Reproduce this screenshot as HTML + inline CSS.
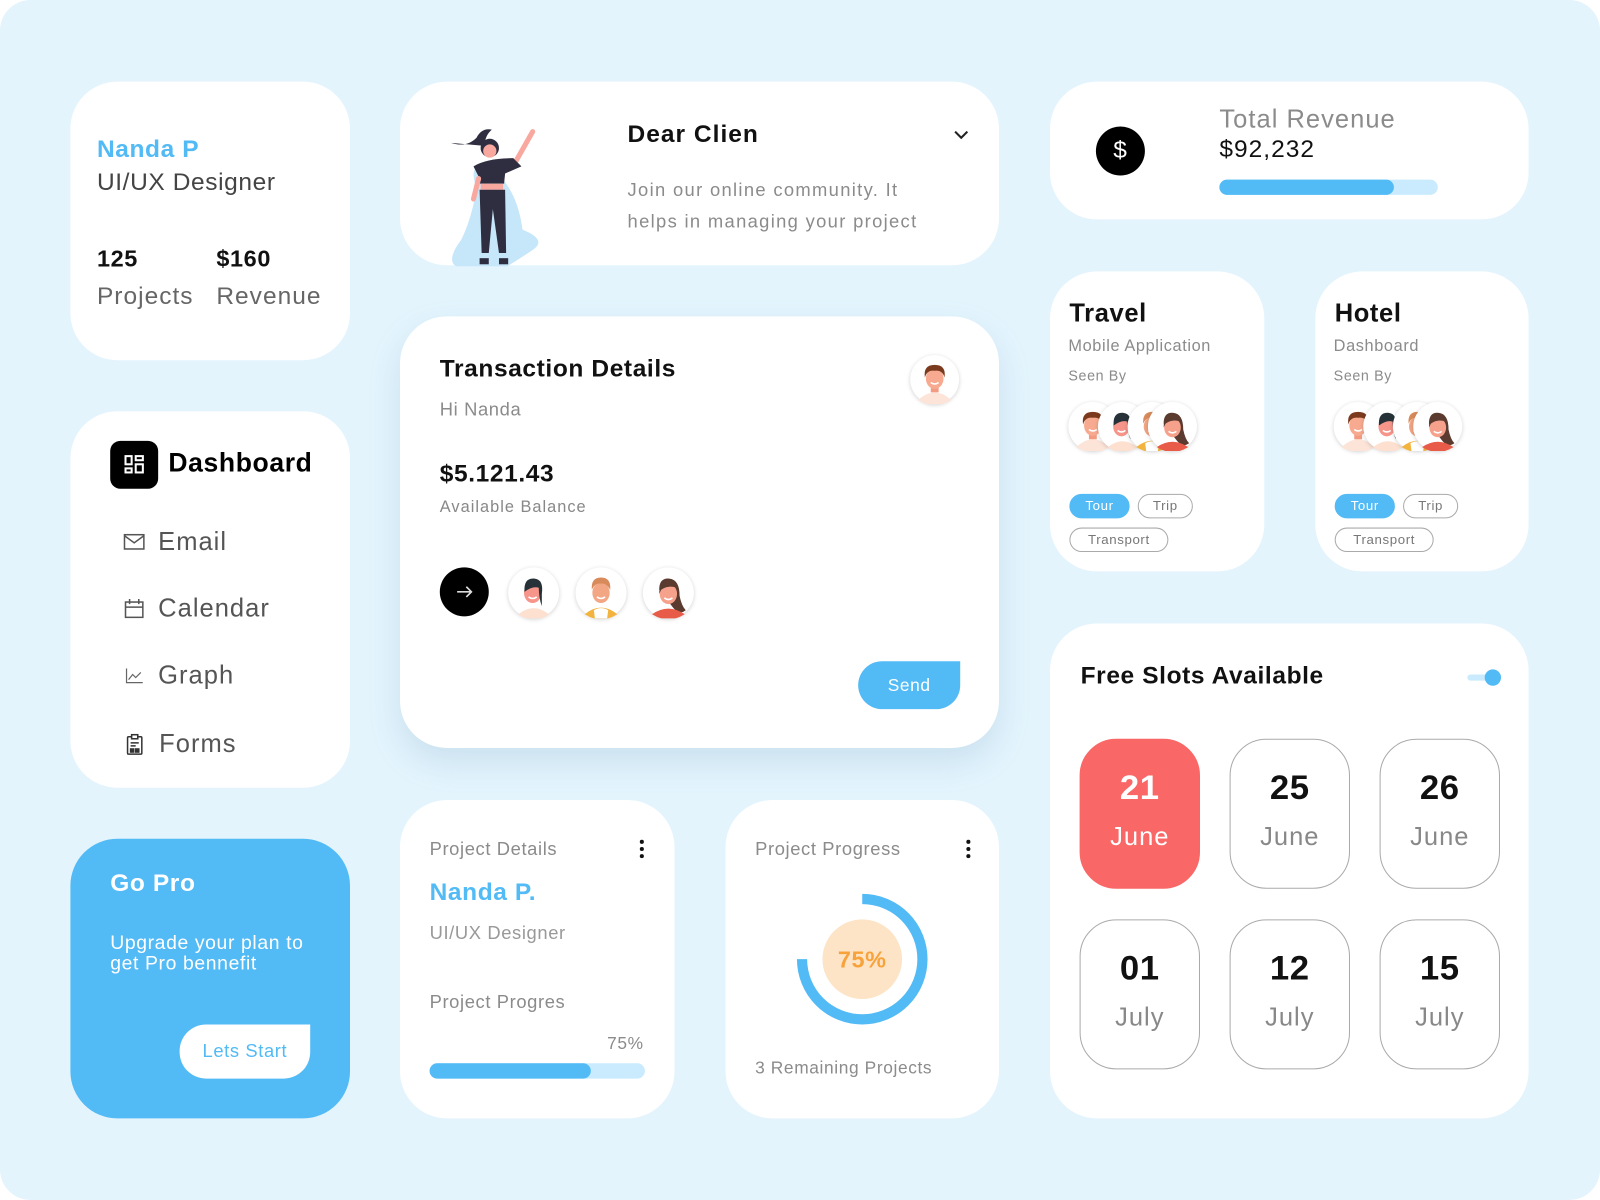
<!DOCTYPE html>
<html><head><meta charset="utf-8">
<style>
*{box-sizing:border-box;margin:0;padding:0}
html,body{width:1600px;height:1200px;overflow:hidden;background:#fff;font-family:"Liberation Sans",sans-serif}
#wrap{position:absolute;left:0;top:0;width:1568px;height:1176px;transform:scale(1.02041);transform-origin:0 0;background:#e3f4fd;border-radius:30px;letter-spacing:0.6px}
.card{position:absolute;background:#fff;border-radius:46px}
.abs{position:absolute}
.g{color:#8b8b8b}
.b{font-weight:bold}
.av{position:absolute;width:50px;height:50px;border-radius:50%;box-shadow:0 1px 4px rgba(0,0,0,.18);background:#fff}
.av svg{display:block}
.tag{position:absolute;height:24px;border:1px solid #aaa;border-radius:12px;font-size:13px;color:#777;text-align:center;line-height:22px}
.tag.on{background:#52baf5;border-color:#52baf5;color:#fff}
.slot{position:absolute;width:118px;height:147px;border:1px solid #aaa;border-radius:36px;text-align:center}
.slot .d{font-size:34px;font-weight:bold;margin-top:28px;color:#111}
.slot .m{font-size:25px;color:#888;margin-top:14px;letter-spacing:1px}
.nav{position:absolute;left:120px;font-size:25px;color:#555;letter-spacing:1px}
</style></head><body>
<svg width="0" height="0" style="position:absolute">
<defs>
<g id="boyA"><path d="M8 46 Q25 30 42 46 Q34 51 25 51 Q16 51 8 46Z" fill="#fde4d8"/><rect x="21" y="30" width="8" height="8" fill="#f39b80"/><ellipse cx="25" cy="24" rx="9" ry="10.5" fill="#f7aa90"/><path d="M15 23 Q13 10 25 10 Q37 10 35 23 Q33 15 25 16 Q17 15 15 23Z" fill="#7b3a1d"/><path d="M21 28 Q25 31 29 28" stroke="#fff" stroke-width="1.6" fill="none"/></g>
<g id="girlB"><path d="M10 46 Q25 34 40 46 Q33 51 25 51 Q17 51 10 46Z" fill="#fde0d0"/><ellipse cx="24" cy="25" rx="8.5" ry="10" fill="#f6958a"/><path d="M16 24 Q15 10 26 11 Q35 12 33 26 L33 38 Q30 30 30 20 Q24 18 16 24Z" fill="#263238"/><path d="M20 29 Q24 32 28 29" stroke="#fff" stroke-width="1.6" fill="none"/></g>
<g id="boyC"><path d="M9 46 Q25 33 41 46 Q33 51 25 51 Q17 51 9 46Z" fill="#f3b33f"/><path d="M18 42 Q25 38 32 42 L31 50 L19 50Z" fill="#fff"/><ellipse cx="25" cy="25" rx="8.5" ry="10" fill="#f2a684"/><path d="M16 22 Q15 10 25 10 Q35 10 34 22 Q30 15 25 16 Q19 15 16 22Z" fill="#d88a5a"/><path d="M21 29 Q25 32 29 29" stroke="#fff" stroke-width="1.6" fill="none"/></g>
<g id="girlD"><path d="M16 22 Q16 10 26 11 Q36 12 36 28 Q38 38 42 42 Q36 47 30 40 Z" fill="#5b3a2f"/><path d="M9 46 Q25 35 41 46 Q33 51 25 51 Q17 51 9 46Z" fill="#e85b48"/><ellipse cx="25" cy="26" rx="8.5" ry="10" fill="#f6a18c"/><path d="M16 26 Q16 13 27 13 Q31 17 33 20 Q25 17 18 22Z" fill="#5b3a2f"/><path d="M21 30 Q25 33 29 30" stroke="#fff" stroke-width="1.6" fill="none"/></g>
</defs></svg>
<div id="wrap">

<div class="card" style="left:69px;top:80px;width:274px;height:273px">
 <div class="abs b" style="left:26px;top:53px;font-size:24px;color:#52baf5">Nanda P</div>
 <div class="abs" style="left:26px;top:85px;font-size:24px;color:#444">UI/UX Designer</div>
 <div class="abs b" style="left:26px;top:160px;font-size:23px;color:#111">125</div>
 <div class="abs b" style="left:143px;top:160px;font-size:23px;color:#111">$160</div>
 <div class="abs" style="left:26px;top:197px;font-size:24px;color:#666;letter-spacing:1px">Projects</div>
 <div class="abs" style="left:143px;top:197px;font-size:24px;color:#666;letter-spacing:1px">Revenue</div>
</div>

<div class="card" style="left:69px;top:403px;width:274px;height:369px"></div>
<div class="abs" style="left:108px;top:432px;width:47px;height:47px;background:#000;border-radius:10px">
 <svg width="47" height="47" viewBox="0 0 47 47" fill="none" stroke="#fff" stroke-width="2"><rect x="15" y="15" width="6" height="8"/><rect x="25" y="15" width="7" height="4"/><rect x="15" y="27" width="6" height="4"/><rect x="25" y="23" width="7" height="8"/></svg>
</div>
<div class="abs b" style="left:165px;top:438px;font-size:26px;color:#000">Dashboard</div>
<svg class="abs" style="left:121px;top:523px" width="21" height="16" viewBox="0 0 21 16" fill="none" stroke="#555" stroke-width="1.5"><rect x="1" y="1" width="19" height="14"/><path d="M1 2 L10.5 9 L20 2"/></svg>
<div class="nav" style="left:155px;top:517px">Email</div>
<svg class="abs" style="left:122px;top:587px" width="19" height="19" viewBox="0 0 19 19" fill="none" stroke="#555" stroke-width="1.5"><rect x="1" y="3" width="17" height="15"/><path d="M1 8 H18 M5 0 V5 M14 0 V5"/></svg>
<div class="nav" style="left:155px;top:582px">Calendar</div>
<svg class="abs" style="left:123px;top:655px" width="17" height="15" viewBox="0 0 17 15" fill="none" stroke="#666" stroke-width="1.2"><path d="M1 0 V14 H17 M3 11 L7 6 L10 9 L15 4"/></svg>
<div class="nav" style="left:155px;top:648px">Graph</div>
<svg class="abs" style="left:124px;top:719px" width="16" height="21" viewBox="0 0 16 21" fill="none" stroke="#333" stroke-width="1.5"><rect x="1" y="3" width="14" height="17" rx="1"/><rect x="5" y="1" width="6" height="4" fill="#fff"/><path d="M4 9 H12 M4 12 H9"/><rect x="4" y="15" width="3" height="3" fill="#333"/><rect x="9" y="15" width="3" height="3" fill="#333"/></svg>
<div class="nav" style="left:156px;top:715px">Forms</div>

<div class="card" style="left:69px;top:822px;width:274px;height:274px;background:#52baf5">
 <div class="abs b" style="left:39px;top:30px;font-size:24px;color:#fff">Go Pro</div>
 <div class="abs" style="left:39px;top:93px;font-size:19px;color:#fff;line-height:20px">Upgrade your plan to<br>get Pro bennefit</div>
 <div class="abs" style="left:107px;top:182px;width:128px;height:53px;background:#fff;border-radius:26px 0 26px 26px;color:#52baf5;font-size:18px;text-align:center;line-height:53px">Lets Start</div>
</div>

<div class="card" style="left:392px;top:80px;width:587px;height:180px">
 <svg class="abs" style="left:45px;top:35px" width="110" height="146" viewBox="0 0 110 146">
  <path d="M30 70 Q20 40 45 50 Q70 70 75 110 Q100 120 85 130 Q70 140 60 146 L10 146 Q0 140 15 120 Q25 100 30 70Z" fill="#c6e6fa"/>
  <path d="M5 25 Q20 30 30 20 Q35 10 45 12 Q38 18 38 28" fill="#2f2e41"/>
  <circle cx="43" cy="30" r="9" fill="#2f2e41"/><circle cx="43" cy="33" r="6.5" fill="#f9a8a0"/>
  <path d="M68 44 L85 14" stroke="#f9a8a0" stroke-width="5" stroke-linecap="round"/>
  <path d="M27 48 Q40 40 66 40 L74 48 L58 55 L57 65 L33 65 L32 58Z" fill="#2f2e41"/>
  <path d="M32 60 L27 80" stroke="#f9a8a0" stroke-width="5" stroke-linecap="round"/>
  <rect x="34" y="65" width="22" height="6" fill="#f9a8a0"/>
  <path d="M33 71 L58 71 L59 133 L52 133 L46 90 L42 133 L35 133Z" fill="#2f2e41"/>
  <rect x="33" y="138" width="9" height="6" fill="#2f2e41"/><rect x="52" y="138" width="9" height="6" fill="#2f2e41"/>
 </svg>
 <div class="abs b" style="left:223px;top:38px;font-size:24px;color:#111;letter-spacing:1px">Dear Clien</div>
 <svg class="abs" style="left:543px;top:48px" width="14" height="9" viewBox="0 0 14 9" fill="none" stroke="#222" stroke-width="2"><path d="M1 1 L7 7 L13 1"/></svg>
 <div class="abs g" style="left:223px;top:91px;font-size:18px;line-height:31px;letter-spacing:1.3px">Join our online community. It<br>helps in managing your project</div>
</div>

<div class="card" style="left:392px;top:310px;width:587px;height:423px;box-shadow:0 14px 30px rgba(120,160,190,.22)">
 <div class="abs b" style="left:39px;top:38px;font-size:24px;color:#111">Transaction Details</div>
 <div class="abs g" style="left:39px;top:81px;font-size:18px">Hi Nanda</div>
 <div class="abs b" style="left:39px;top:141px;font-size:24px;color:#111">$5.121.43</div>
 <div class="abs g" style="left:39px;top:179px;font-size:16px;color:#888;letter-spacing:1px">Available Balance</div>
 <div class="abs" style="left:39px;top:246px;width:48px;height:48px;border-radius:50%;background:#000">
  <svg width="48" height="48" viewBox="0 0 48 48" fill="none" stroke="#ddd" stroke-width="1.6"><path d="M17 24 H31 M26 19 L31 24 L26 29"/></svg>
 </div>
 <div class="av" style="left:106px;top:246px"><svg width="50" height="50" viewBox="0 0 50 50"><use href="#girlB"/></svg></div>
 <div class="av" style="left:172px;top:246px"><svg width="50" height="50" viewBox="0 0 50 50"><use href="#boyC"/></svg></div>
 <div class="av" style="left:238px;top:246px"><svg width="50" height="50" viewBox="0 0 50 50"><use href="#girlD"/></svg></div>
 <div class="av" style="left:500px;top:38px;width:48px;height:48px"><svg width="48" height="48" viewBox="0 0 50 50"><use href="#boyA"/></svg></div>
 <div class="abs" style="left:449px;top:338px;width:100px;height:47px;background:#52baf5;border-radius:24px 0 24px 24px;color:#fff;font-size:17px;text-align:center;line-height:47px">Send</div>
</div>

<div class="card" style="left:392px;top:784px;width:269px;height:312px">
 <div class="abs g" style="left:29px;top:38px;font-size:18px">Project Details</div>
 <svg class="abs" style="left:234px;top:38px" width="6" height="20"><circle cx="3" cy="3" r="2" fill="#111"/><circle cx="3" cy="10" r="2" fill="#111"/><circle cx="3" cy="17" r="2" fill="#111"/></svg>
 <div class="abs b" style="left:29px;top:77px;font-size:24px;color:#52baf5">Nanda P.</div>
 <div class="abs g" style="left:29px;top:120px;font-size:18px;color:#999">UI/UX Designer</div>
 <div class="abs g" style="left:29px;top:188px;font-size:18px">Project Progres</div>
 <div class="abs g" style="left:203px;top:229px;font-size:17px">75%</div>
 <div class="abs" style="left:29px;top:258px;width:211px;height:15px;background:#c9ebfd;border-radius:8px"><div style="width:158px;height:15px;background:#52baf5;border-radius:8px"></div></div>
</div>

<div class="card" style="left:711px;top:784px;width:268px;height:312px">
 <div class="abs g" style="left:29px;top:38px;font-size:18px">Project Progress</div>
 <svg class="abs" style="left:235px;top:38px" width="6" height="20"><circle cx="3" cy="3" r="2" fill="#111"/><circle cx="3" cy="10" r="2" fill="#111"/><circle cx="3" cy="17" r="2" fill="#111"/></svg>
 <svg class="abs" style="left:64px;top:90px" width="140" height="140" viewBox="0 0 140 140">
  <circle cx="70" cy="66" r="39" fill="#fde4c6"/>
  <path d="M70 7 A59 59 0 1 1 11 66" fill="none" stroke="#52baf5" stroke-width="10"/>
  <text x="70" y="74" text-anchor="middle" font-family="Liberation Sans" font-weight="bold" font-size="23" fill="#f7a23a">75%</text>
 </svg>
 <div class="abs g" style="left:29px;top:253px;font-size:17px">3 Remaining Projects</div>
</div>

<div class="card" style="left:1029px;top:80px;width:469px;height:135px">
 <div class="abs" style="left:45px;top:44px;width:48px;height:48px;border-radius:50%;background:#000;color:#fff;font-size:24px;text-align:center;line-height:48px">$</div>
 <div class="abs g" style="left:166px;top:23px;font-size:25px;letter-spacing:1px">Total Revenue</div>
 <div class="abs" style="left:166px;top:53px;font-size:24px;color:#111;letter-spacing:1px">$92,232</div>
 <div class="abs" style="left:166px;top:96px;width:214px;height:15px;background:#c9ebfd;border-radius:8px"><div style="width:171px;height:15px;background:#52baf5;border-radius:8px"></div></div>
</div>

<div class="card" style="left:1029px;top:266px;width:210px;height:294px">
 <div class="abs b" style="left:19px;top:27px;font-size:25px;color:#111">Travel</div>
 <div class="abs g" style="left:18px;top:65px;font-size:16px">Mobile Application</div>
 <div class="abs g" style="left:18px;top:94px;font-size:14px">Seen By</div>
 <div class="av" style="left:18px;top:128px;width:48px;height:48px"><svg width="48" height="48" viewBox="0 0 50 50"><use href="#boyA"/></svg></div>
 <div class="av" style="left:47px;top:128px;width:48px;height:48px"><svg width="48" height="48" viewBox="0 0 50 50"><use href="#girlB"/></svg></div>
 <div class="av" style="left:76px;top:128px;width:48px;height:48px"><svg width="48" height="48" viewBox="0 0 50 50"><use href="#boyC"/></svg></div>
 <div class="av" style="left:96px;top:128px;width:48px;height:48px"><svg width="48" height="48" viewBox="0 0 50 50"><use href="#girlD"/></svg></div>
 <div class="tag on" style="left:19px;top:218px;width:59px">Tour</div>
 <div class="tag" style="left:86px;top:218px;width:54px">Trip</div>
 <div class="tag" style="left:19px;top:251px;width:97px">Transport</div>
</div>

<div class="card" style="left:1289px;top:266px;width:209px;height:294px">
 <div class="abs b" style="left:19px;top:27px;font-size:25px;color:#111">Hotel</div>
 <div class="abs g" style="left:18px;top:65px;font-size:16px">Dashboard</div>
 <div class="abs g" style="left:18px;top:94px;font-size:14px">Seen By</div>
 <div class="av" style="left:18px;top:128px;width:48px;height:48px"><svg width="48" height="48" viewBox="0 0 50 50"><use href="#boyA"/></svg></div>
 <div class="av" style="left:47px;top:128px;width:48px;height:48px"><svg width="48" height="48" viewBox="0 0 50 50"><use href="#girlB"/></svg></div>
 <div class="av" style="left:76px;top:128px;width:48px;height:48px"><svg width="48" height="48" viewBox="0 0 50 50"><use href="#boyC"/></svg></div>
 <div class="av" style="left:96px;top:128px;width:48px;height:48px"><svg width="48" height="48" viewBox="0 0 50 50"><use href="#girlD"/></svg></div>
 <div class="tag on" style="left:19px;top:218px;width:59px">Tour</div>
 <div class="tag" style="left:86px;top:218px;width:54px">Trip</div>
 <div class="tag" style="left:19px;top:251px;width:97px">Transport</div>
</div>

<div class="card" style="left:1029px;top:611px;width:469px;height:485px">
 <div class="abs b" style="left:30px;top:38px;font-size:24px;color:#111">Free Slots Available</div>
 <div class="abs" style="left:409px;top:50px;width:24px;height:6px;background:#c9ebfd;border-radius:3px"></div>
 <div class="abs" style="left:426px;top:45px;width:16px;height:16px;border-radius:50%;background:#52baf5"></div>
 <div class="slot" style="left:29px;top:113px;background:#f96767;border-color:#f96767"><div class="d" style="color:#fff">21</div><div class="m" style="color:#fff">June</div></div>
 <div class="slot" style="left:176px;top:113px"><div class="d">25</div><div class="m">June</div></div>
 <div class="slot" style="left:323px;top:113px"><div class="d">26</div><div class="m">June</div></div>
 <div class="slot" style="left:29px;top:290px"><div class="d">01</div><div class="m">July</div></div>
 <div class="slot" style="left:176px;top:290px"><div class="d">12</div><div class="m">July</div></div>
 <div class="slot" style="left:323px;top:290px"><div class="d">15</div><div class="m">July</div></div>
</div>

</div>
</body></html>
